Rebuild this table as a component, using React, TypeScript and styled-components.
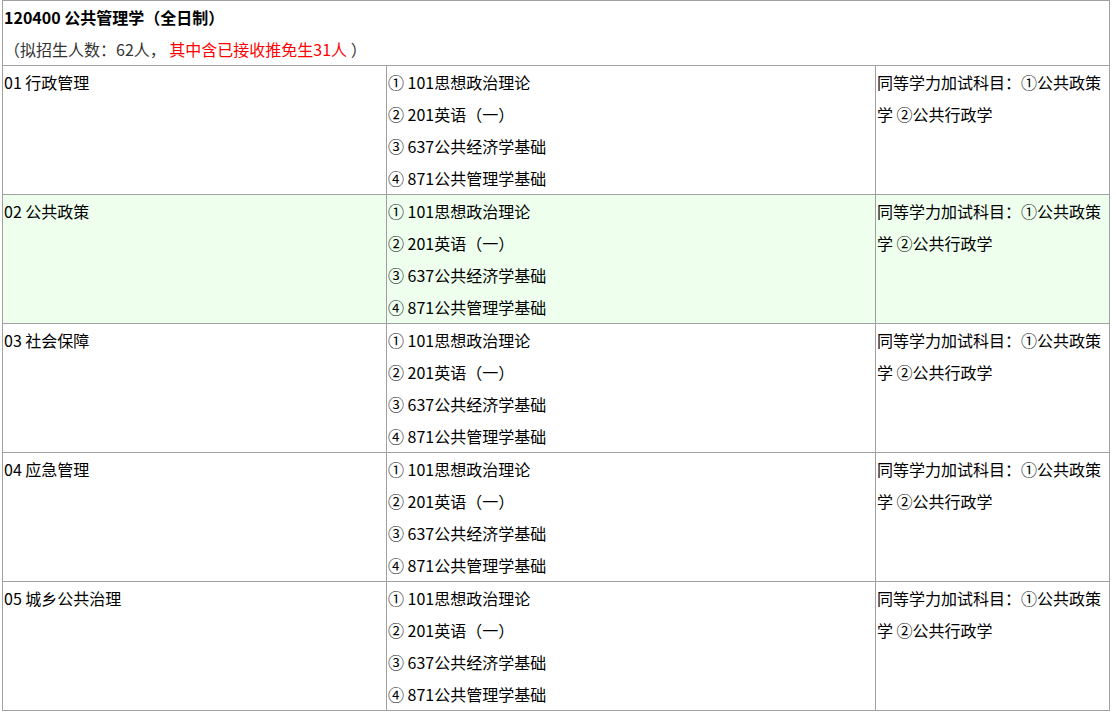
import React from "react";
import styled, { createGlobalStyle } from "styled-components";

const Global = createGlobalStyle`
  html, body { margin: 0; padding: 0; background: #fff; }
  body {
    font-family: "Noto Sans CJK SC", "Microsoft YaHei", "Noto Sans", sans-serif;
    font-size: 16px;
    color: #000;
  }
`;

const Wrap = styled.div`
  padding-left: 2px;
  width: 1107px;
`;

const Table = styled.table`
  width: 1107px;
  border-collapse: collapse;
  table-layout: fixed;
`;

const Cell = styled.td<{ $green?: boolean }>`
  border: 1px solid #a0a0a0;
  padding: 0 1px;
  vertical-align: top;
  line-height: 32px;
  font-size: 16px;
  background: ${(p) => (p.$green ? "#eeffee" : "#fff")};
`;

const Title = styled.div`
  font-weight: bold;
  line-height: 32px;
`;

const Quota = styled.div`
  color: #333;
  line-height: 32px;
  white-space: pre;
`;

const Red = styled.span`
  color: #ff0000;
`;

const Line = styled.div`
  line-height: 32px;
  white-space: nowrap;
`;

const rows = ["01 行政管理", "02 公共政策", "03 社会保障", "04 应急管理", "05 城乡公共治理"];
const subjects = ["① 101思想政治理论", "② 201英语（一）", "③ 637公共经济学基础", "④ 871公共管理学基础"];

export default function App() {
  return (
    <Wrap>
      <Global />
      <Table>
        <colgroup>
          <col style={{ width: 384 }} />
          <col style={{ width: 489 }} />
          <col style={{ width: 234 }} />
        </colgroup>
        <tbody>
          <tr>
            <Cell colSpan={3}>
              <Title>120400 公共管理学（全日制）</Title>
              <Quota>
                {"（拟招生人数：62人， "}<Red>其中含已接收推免生31人</Red>{" ）"}
              </Quota>
            </Cell>
          </tr>
          {rows.map((r, i) => (
            <tr key={r}>
              <Cell $green={i === 1}>{r}</Cell>
              <Cell $green={i === 1}>
                {subjects.map((s) => (
                  <Line key={s}>{s}</Line>
                ))}
              </Cell>
              <Cell $green={i === 1}>同等学力加试科目：①公共政策学 ②公共行政学</Cell>
            </tr>
          ))}
        </tbody>
      </Table>
    </Wrap>
  );
}
